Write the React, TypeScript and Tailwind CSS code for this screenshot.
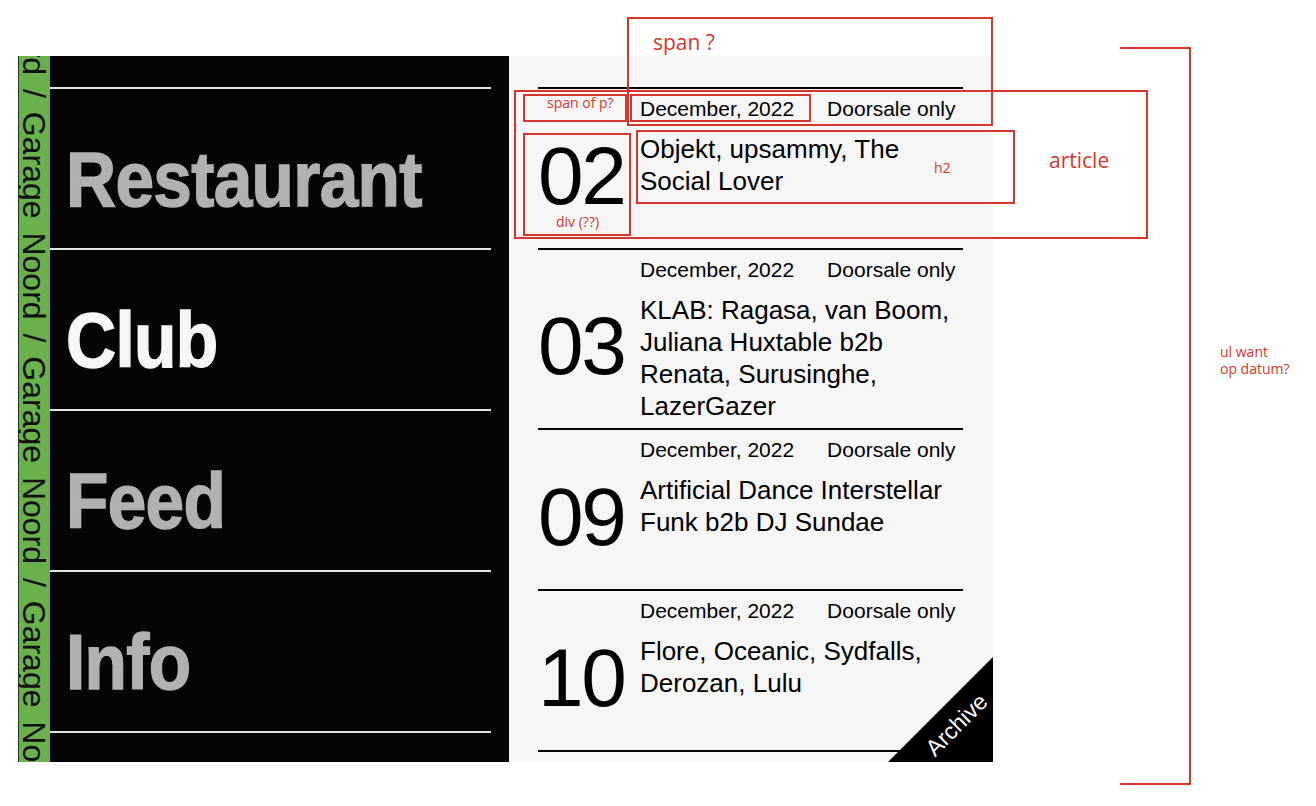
const navItems = [
  { label: "Restaurant", color: "text-[#b1b1b1]" },
  { label: "Club", color: "text-[#f6f6f6]" },
  { label: "Feed", color: "text-[#b1b1b1]" },
  { label: "Info", color: "text-[#b1b1b1]" },
];

const events = [
  { day: "02", title: "Objekt, upsammy, The Social Lover" },
  { day: "03", title: "KLAB: Ragasa, van Boom, Juliana Huxtable b2b Renata, Surusinghe, LazerGazer" },
  { day: "09", title: "Artificial Dance Interstellar Funk b2b DJ Sundae" },
  { day: "10", title: "Flore, Oceanic, Sydfalls, Derozan, Lulu" },
];

const sans = "font-['Liberation_Sans',Arial,sans-serif]";
const note = "font-['Open_Sans',sans-serif] text-[#d6362b]";

export default function App() {
  return (
    <div className="relative w-[1316px] h-[806px] bg-white overflow-hidden">
      {/* mockup */}
      <div className="flex ml-[18px] mt-[56px] h-[706px]">
        {/* green side strip */}
        <div className="w-[32px] shrink-0 border-l border-[#2a2a2a] bg-[#6ab04c] overflow-hidden">
          <div
            className={`${sans} [writing-mode:vertical-rl] [word-spacing:5px] whitespace-nowrap text-[32px] leading-[30px] text-[#111] -mt-[68px]`}
          >
            Noord / Garage Noord / Garage Noord / Garage Noord / Garage Noord /
          </div>
        </div>

        {/* black nav panel */}
        <nav className="w-[459px] shrink-0 bg-[#040506] pt-[31px]">
          <ul className="mr-[18px]">
            {navItems.map((item) => (
              <li
                key={item.label}
                className="h-[161px] border-t-2 border-[#e4e4e4] pl-[16px] pt-[51px]"
              >
                <span
                  className={`${sans} ${item.color} inline-block origin-left scale-x-[0.89] font-bold text-[78px] leading-none tracking-[-0.01em] [-webkit-text-stroke:1.5px_currentColor]`}
                >
                  {item.label}
                </span>
              </li>
            ))}
          </ul>
          <div className="mr-[18px] border-t-2 border-[#e4e4e4]" />
        </nav>

        {/* agenda */}
        <section className="relative w-[484px] shrink-0 bg-[#f6f6f6] pt-[31px] overflow-hidden">
          <ul className="pl-[29px] pr-[30px]">
            {events.map((ev) => (
              <li key={ev.day} className="flex min-h-[161px] border-t-2 border-black pb-[6px]">
                <div
                  className={`${sans} w-[102px] shrink-0 pt-5 flex items-center text-[82px] leading-none tracking-[-0.03em] text-black`}
                >
                  {ev.day}
                </div>
                <article className={`${sans} flex-1 pt-2 text-black`}>
                  <p className="flex gap-[33px] text-[21px] leading-6">
                    <span>December, 2022</span>
                    <span>Doorsale only</span>
                  </p>
                  <h2 className="mt-3 text-[26px] leading-8">{ev.title}</h2>
                </article>
              </li>
            ))}
          </ul>
          <div className="ml-[29px] mr-[30px] border-t-2 border-black" />

          {/* archive corner */}
          <div className="absolute right-0 bottom-0 w-[105px] h-[105px] bg-black [clip-path:polygon(100%_0,100%_100%,0_100%)]" />
          <span
            className={`${sans} absolute right-[36px] bottom-[37px] translate-x-1/2 translate-y-1/2 -rotate-45 text-white text-[23px] leading-none`}
          >
            Archive
          </span>
        </section>
      </div>

      {/* red annotations */}
      <div className="absolute left-[627px] top-[17px] w-[366px] h-[109px] border-2 border-[#d6362b]" />
      <div className="absolute left-[514px] top-[90px] w-[634px] h-[149px] border-2 border-[#d6362b]" />
      <div className="absolute left-[523px] top-[94px] w-[104px] h-[28px] border-2 border-[#d6362b]" />
      <div className="absolute left-[630px] top-[94px] w-[181px] h-[28px] border-2 border-[#d6362b]" />
      <div className="absolute left-[523px] top-[133px] w-[108px] h-[103px] border-2 border-[#d6362b]" />
      <div className="absolute left-[636px] top-[130px] w-[379px] h-[74px] border-2 border-[#d6362b]" />
      <div className="absolute left-[1120px] top-[47px] w-[71px] h-[738px] border-t-2 border-r-2 border-b-2 border-[#d6362b]" />

      <span className={`${note} absolute left-[653px] top-[30px] text-[21px] leading-6`}>span ?</span>
      <span className={`${note} absolute left-[1049px] top-[148px] text-[21px] leading-6`}>article</span>
      <span className={`${note} absolute left-[547px] top-[95px] text-[14px] leading-4`}>span of p?</span>
      <span className={`${note} absolute left-[556px] top-[214px] text-[14px] leading-4`}>div (??)</span>
      <span className={`${note} absolute left-[934px] top-[160px] text-[14px] leading-4`}>h2</span>
      <p className={`${note} absolute left-[1220px] top-[343px] text-[14px] leading-[17px]`}>
        ul want
        <br />
        op datum?
      </p>
    </div>
  );
}
